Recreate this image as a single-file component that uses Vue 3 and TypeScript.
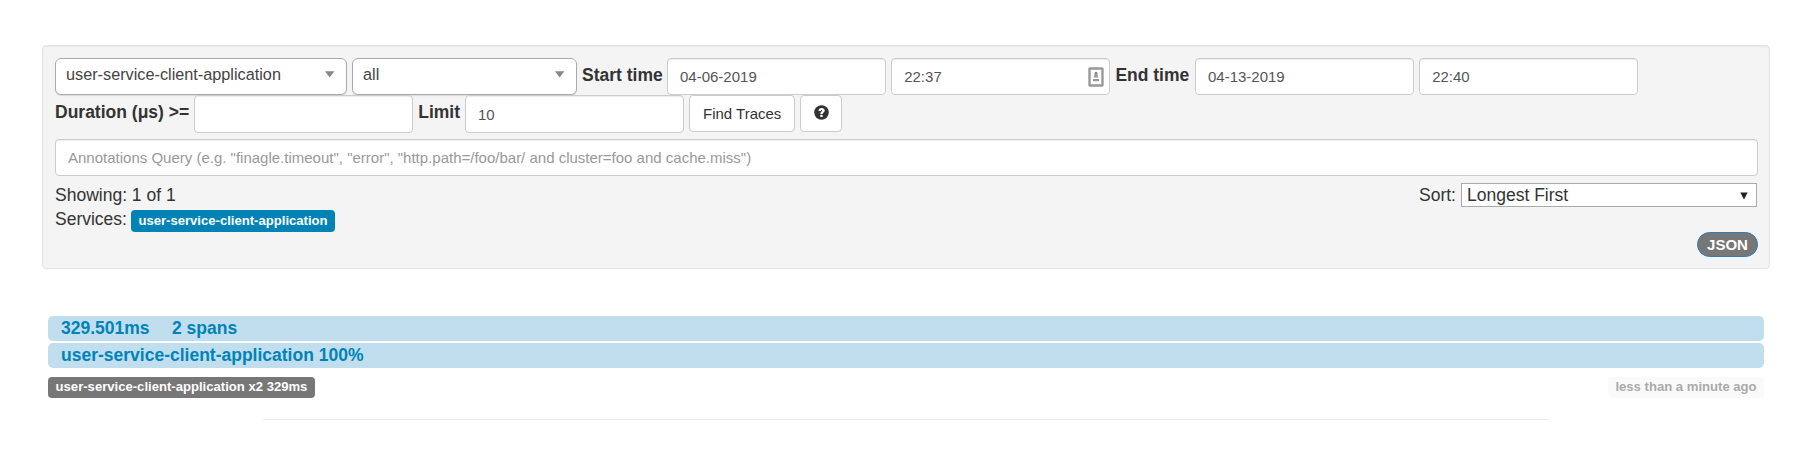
<script setup lang="ts">
import { ref } from 'vue'

const service = 'user-service-client-application'
const startDate = ref('04-06-2019')
const startTime = ref('22:37')
const endDate = ref('04-13-2019')
const endTime = ref('22:40')
const duration = ref('')
const limit = ref('10')
const query = ref('')
</script>

<template>
  <main class="page">
    <section class="well">
      <div class="row">
        <div class="chosen wide"><span>{{ service }}</span><svg width="10" height="7" viewBox="0 0 10 7"><path d="M0 0.3H9.4L4.7 6.6Z" fill="#888" /></svg></div>
        <div class="chosen narrow"><span>all</span><svg width="10" height="7" viewBox="0 0 10 7"><path d="M0 0.3H9.4L4.7 6.6Z" fill="#888" /></svg></div>
        <label class="l-start">Start time</label>
        <input v-model="startDate" class="field">
        <div class="time">
          <input v-model="startTime" class="field">
          <svg class="badge" width="16" height="20" viewBox="0 0 16 20">
            <rect x="1.5" y="1.5" width="13" height="17" rx="0.5" fill="#fff" stroke="#999" stroke-width="2.4" />
            <circle cx="8" cy="6.2" r="1.5" fill="#888" />
            <path d="M6.8 7h2.4l1.3 3.6h-5zM5 12h6v2.2H5z" fill="#999" />
          </svg>
        </div>
        <label class="l-end">End time</label>
        <input v-model="endDate" class="field">
        <input v-model="endTime" class="field last">
      </div>
      <div class="row second">
        <label class="l-duration">Duration (μs) &gt;=</label>
        <input v-model="duration" class="field">
        <label class="l-limit">Limit</label>
        <input v-model="limit" class="field">
        <button class="btn find">Find Traces</button>
        <button class="btn help" aria-label="Help">
          <svg width="15" height="15" viewBox="0 0 15 15">
            <circle cx="7.5" cy="7.5" r="7.3" fill="#333" />
            <path d="M4.5 5.9C4.6 4 5.8 2.9 7.6 2.9c1.8 0 3.1 1 3.1 2.6 0 2.1-2.1 2.1-2.1 3.5H6.3c0-2.3 1.9-2.3 1.9-3.4 0-.9-1.3-.9-1.4.4z" fill="#fff" />
            <rect x="6.3" y="9.8" width="2.3" height="2.2" fill="#fff" />
          </svg>
        </button>
      </div>
      <input v-model="query" class="field query" placeholder="Annotations Query (e.g. &quot;finagle.timeout&quot;, &quot;error&quot;, &quot;http.path=/foo/bar/ and cluster=foo and cache.miss&quot;)">
      <div class="summary">
        <div class="counts">
          <div class="line">Showing: 1 of 1</div>
          <div class="line services"><span>Services:</span><span class="label blue">{{ service }}</span></div>
        </div>
        <div class="sort">
          <span>Sort:</span>
          <div class="sort-box"><span>Longest First</span><svg width="8" height="8" viewBox="0 0 8 8"><path d="M0.3 0.5H7.7L4 7.5Z" fill="#222" /></svg></div>
        </div>
      </div>
      <div class="actions"><a class="json">JSON</a></div>
    </section>
    <section class="traces">
      <div class="bar"><span class="t-ms">329.501ms</span><span>2 spans</span></div>
      <div class="bar"><span>{{ service }} 100%</span></div>
      <div class="meta"><span class="label gray">{{ service }} x2 329ms</span><span class="label ago">less than a minute ago</span></div>
    </section>
    <hr class="rule">
  </main>
</template>

<style>
body { margin: 0; background: #fff; }
</style>

<style scoped>
* { box-sizing: border-box; }
.page { height: 449px; padding: 45px 36px 0 42px; font: 17.5px/24px "Liberation Sans", Arial, sans-serif; color: #333; white-space: nowrap; overflow: hidden; }
.well { height: 224px; border: 1px solid #e3e3e3; border-radius: 4px; background: #f4f4f4; box-shadow: inset 0 1px 1px rgba(0,0,0,.05); padding: 12px 11px 0 12px; }
.row { display: flex; height: 37px; align-items: flex-start; }
.row.second { height: 38px; }
.chosen { height: 37px; flex: none; display: flex; justify-content: space-between; background: #fff; border: 1px solid #aaa; border-radius: 6px; padding: 3px 11px 0 10px; font-size: 16.25px; color: #444; margin-right: 5px; box-shadow: 0 1px 1px rgba(0,0,0,.1); }
.chosen svg { margin-top: 9px; }
.wide { width: 292px; }
.narrow { width: 225px; }
label { flex: none; font-weight: bold; padding-top: 5px; }
.l-start { width: 85px; }
.l-end { width: 79.6px; }
.l-duration { width: 139px; }
.l-limit { width: 46.8px; }
.field { flex: none; width: 219.2px; height: 37px; margin: 0 5px 0 0; padding: 0 12px; border: 1px solid #ccc; border-radius: 4px; background: #fff; box-shadow: inset 0 1px 1px rgba(0,0,0,.075); font: 15px "Liberation Sans", Arial, sans-serif; color: #555; outline: none; }
.second .field { height: 38px; }
.time { position: relative; flex: none; }
.time .field { display: block; }
.badge { position: absolute; left: 196.8px; top: 8.5px; }
.last { margin-right: 0; }
.btn { height: 37px; flex: none; margin: 0 5px 0 0; border: 1px solid #ccc; border-radius: 4px; background: #fff; font: 15px "Liberation Sans", Arial, sans-serif; color: #333; padding: 0; }
.find { width: 106px; }
.help { width: 42px; display: flex; justify-content: center; padding-top: 9px; align-items: flex-start; }
.query { display: block; width: 1703px; margin: 6px 0 0; padding-bottom: 1px; }
.query::placeholder { color: #999; opacity: 1; }
.summary { display: flex; justify-content: space-between; padding-top: 7px; }
.line { height: 24px; }
.services { display: flex; }
.label { display: flex; align-items: center; justify-content: center; height: 21px; border-radius: 4px; color: #fff; font-weight: bold; font-size: 13.1px; }
.blue { width: 204px; height: 22px; margin: 3px 0 0 5px; padding-bottom: 1px; background: #0184b5; }
.services > span:first-child { width: 71px; }
.sort { display: flex; width: 339px; }
.sort > span { width: 42px; }
.sort-box { width: 296px; height: 24px; background: #fff; border: 1px solid #aaa; display: flex; justify-content: space-between; padding: 0 8px 0 5px; line-height: 22px; }
.sort-box svg { margin-top: 8px; }
.actions { display: flex; justify-content: flex-end; padding-top: 1px; }
.json { width: 61px; height: 25px; border: 1px solid #337ab7; border-radius: 13px; background: #777; color: #fff; font-size: 15px; font-weight: bold; text-align: center; line-height: 24px; }
.traces { padding: 47px 6px 0; }
.bar { width: 1716px; height: 25px; margin-bottom: 2px; background: #c1deee; border-radius: 5px; padding-left: 13px; color: #0084b8; font-weight: bold; display: flex; }
.t-ms { width: 111px; }
.meta { display: flex; justify-content: space-between; margin-top: 9px; width: 1716px; }
.gray { width: 267px; padding-bottom: 2px; background: #777; }
.ago { width: 156px; padding-bottom: 2px; background: #fafafa; color: #aaa; }
.rule { width: 1286px; height: 1px; border: 0; background: #eee; margin: 21px 0 0 221px; }
</style>
